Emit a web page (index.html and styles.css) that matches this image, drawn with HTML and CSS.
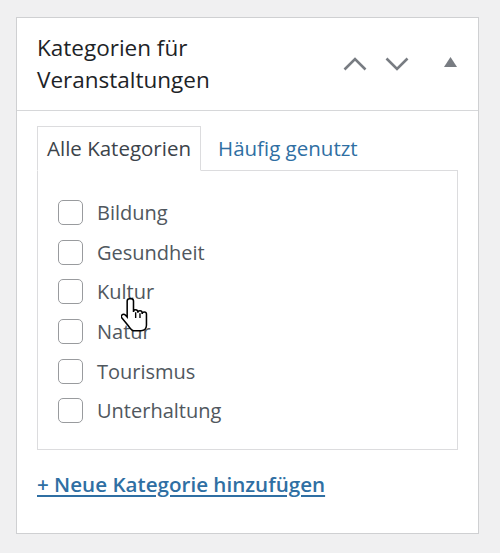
FILE: index.html
```html
<!DOCTYPE html>
<html lang="de">
<head>
<meta charset="utf-8">
<title>Kategorien für Veranstaltungen</title>
<link rel="stylesheet" href="styles.css">
</head>
<body>
<div class="postbox">
  <div class="postbox-header">
    <h2 class="hndle">Kategorien für<br>Veranstaltungen</h2>
    <div class="handle-actions">
      <button class="handle-btn" aria-label="Nach oben">
        <svg width="24" height="14" viewBox="0 0 24 14"><path d="M1.5 12.5 L12 2 L22.5 12.5" fill="none" stroke="#787c82" stroke-width="2.6"/></svg>
      </button>
      <button class="handle-btn" aria-label="Nach unten">
        <svg width="24" height="14" viewBox="0 0 24 14"><path d="M1.5 1.5 L12 12 L22.5 1.5" fill="none" stroke="#787c82" stroke-width="2.6"/></svg>
      </button>
      <button class="handle-btn toggle" aria-label="Umschalten">
        <svg width="13" height="10" viewBox="0 0 13 10"><path d="M0 10 L6.5 0 L13 10 Z" fill="#787c82"/></svg>
      </button>
    </div>
  </div>
  <div class="inside">
    <ul class="tabs">
      <li class="tab active">Alle Kategorien</li>
      <li class="tab"><a href="#">Häufig genutzt</a></li>
    </ul>
    <div class="tabs-panel">
      <label class="cat"><span class="box"></span>Bildung</label>
      <label class="cat"><span class="box"></span>Gesundheit</label>
      <label class="cat"><span class="box"></span>Kultur</label>
      <label class="cat"><span class="box"></span>Natur</label>
      <label class="cat"><span class="box"></span>Tourismus</label>
      <label class="cat"><span class="box"></span>Unterhaltung</label>
    </div>
    <a class="add-link" href="#">+ Neue Kategorie hinzufügen</a>
  </div>
</div>
<svg class="cursor" width="27" height="34" viewBox="0 0 17.5 22">
  <path d="M5.5 0.5 c-0.8 0 -1.5 0.7 -1.5 1.5 V12.3 L2.8 11 c-0.6 -0.6 -1.6 -0.6 -2.2 0 c-0.5 0.5 -0.5 1.3 0 1.9 L4.6 17.8 c1 1.5 2 3 3.4 3.4 H13 c2 0 3.5 -1.5 3.5 -3.5 V10.4 c0 -0.8 -0.6 -1.4 -1.4 -1.4 c-0.8 0 -1.4 0.6 -1.4 1.4 V9.6 c0 -0.8 -0.6 -1.4 -1.4 -1.4 c-0.8 0 -1.4 0.6 -1.4 1.4 V9 c0 -0.8 -0.6 -1.4 -1.4 -1.4 c-0.8 0 -1.4 0.6 -1.4 1.4 V2 c0 -0.8 -0.7 -1.5 -1.5 -1.5 Z" fill="#fff" stroke="#000" stroke-width="1"/>
  <path d="M9.5 9.2 V13 M12.3 9.8 V13" stroke="#000" stroke-width="0.9" fill="none"/>
</svg>
</body>
</html>
```
FILE: styles.css
```css
html, body {
  margin: 0;
  padding: 0;
}
body {
  background: #f0f0f1;
  padding: 17px 0 0 16px;
  font-family: "Open Sans", "Liberation Sans", sans-serif;
  position: relative;
  height: 553px;
  box-sizing: border-box;
}
.postbox {
  width: 463px;
  box-sizing: border-box;
  background: #fff;
  border: 1px solid #cfd0d2;
}
.postbox-header {
  height: 92px;
  border-bottom: 1px solid #d6d7d9;
  display: flex;
  align-items: center;
  justify-content: space-between;
  padding: 0 7px 0 20px;
}
.hndle {
  margin: 0;
  font-size: 22.5px;
  line-height: 32px;
  font-weight: 500;
  color: #1d2327;
}
.handle-actions {
  display: flex;
  align-items: center;
  align-self: stretch;
}
.handle-btn {
  width: 42px;
  height: 92px;
  padding: 0;
  border: 0;
  background: none;
  display: flex;
  align-items: center;
  justify-content: center;
}
.handle-btn svg {
  display: block;
}
.handle-btn.toggle {
  margin-left: 11px;
  padding-bottom: 5px;
}
.inside {
  padding: 15px 20px 35px 20px;
}
.tabs {
  list-style: none;
  margin: 0 0 -1px 0;
  padding: 0;
  display: flex;
  position: relative;
  z-index: 1;
}
.tab {
  height: 45px;
  box-sizing: border-box;
  display: flex;
  align-items: center;
  font-size: 20.5px;
}
.tab.active {
  border: 1px solid #dcdcde;
  border-bottom-color: #fff;
  background: #fff;
  padding: 0 9px 2px 9px;
  color: #3c434a;
}
.tab a {
  color: #2f6fa3;
  text-decoration: none;
  padding: 0 0 2px 17px;
}
.tabs-panel {
  border: 1px solid #dcdcde;
  padding: 22px 20px 18px 20px;
  display: flex;
  flex-direction: column;
}
.cat {
  height: 39.6px;
  display: flex;
  align-items: center;
  font-size: 20px;
  color: #50575e;
}
.box {
  width: 25px;
  height: 25px;
  box-sizing: border-box;
  border: 1px solid #999b9e;
  border-radius: 5px;
  margin-right: 14px;
  flex: none;
}
.add-link {
  display: inline-block;
  margin-top: 20px;
  font-size: 20.6px;
  line-height: 28px;
  font-weight: 600;
  color: #2f6fa3;
  text-decoration: underline;
  text-underline-offset: 3px;
}
.cursor {
  position: absolute;
  left: 121px;
  top: 298px;
}
```
